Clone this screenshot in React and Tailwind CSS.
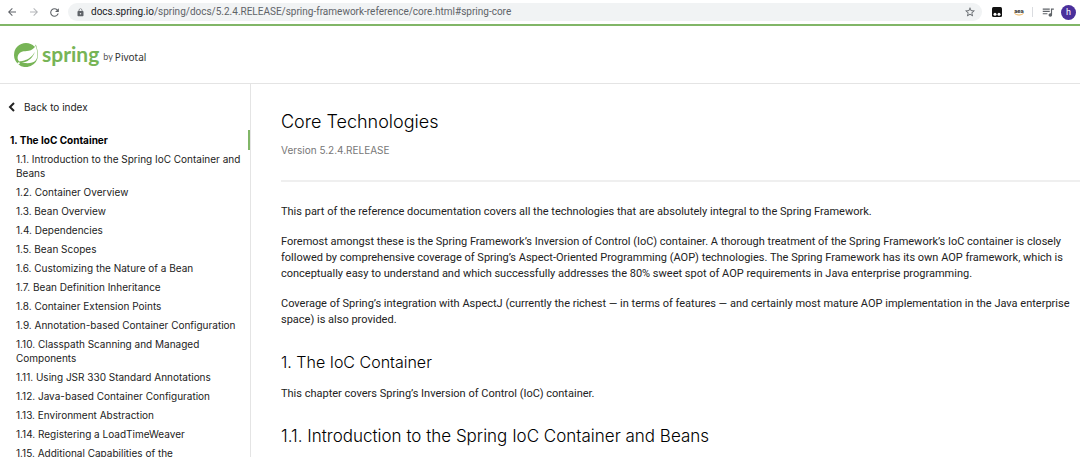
import React from "react";
import { SiSpring } from "react-icons/si";
import { MdArrowBack, MdArrowForward, MdRefresh, MdLock, MdStarBorder, MdQueueMusic } from "react-icons/md";

const sections = [
  "1.1. Introduction to the Spring IoC Container and Beans",
  "1.2. Container Overview",
  "1.3. Bean Overview",
  "1.4. Dependencies",
  "1.5. Bean Scopes",
  "1.6. Customizing the Nature of a Bean",
  "1.7. Bean Definition Inheritance",
  "1.8. Container Extension Points",
  "1.9. Annotation-based Container Configuration",
  "1.10. Classpath Scanning and Managed Components",
  "1.11. Using JSR 330 Standard Annotations",
  "1.12. Java-based Container Configuration",
  "1.13. Environment Abstraction",
  "1.14. Registering a LoadTimeWeaver",
  "1.15. Additional Capabilities of the",
];

function BrowserBar() {
  return (
    <div className="flex h-6 shrink-0 items-center bg-white font-[Roboto,sans-serif] text-[#5f6368]">
      <button aria-label="Back" className="ml-1.5 w-3"><MdArrowBack size={12} /></button>
      <button aria-label="Forward" className="ml-2.5 w-3 text-[#b4b6b9]"><MdArrowForward size={12} /></button>
      <button aria-label="Reload" className="ml-2 w-3"><MdRefresh size={13} /></button>
      <div className="ml-2 flex h-[18px] flex-1 items-center rounded-full bg-[#f1f3f4] pr-1.5 pl-2">
        <MdLock size={9} />
        <div className="ml-1.5 flex-1 text-[10px] leading-4 whitespace-nowrap">
          <span className="text-[#202124]">docs.spring.io</span>/spring/docs/5.2.4.RELEASE/spring-framework-reference/core.html#spring-core
        </div>
        <button aria-label="Bookmark"><MdStarBorder size={12} /></button>
      </div>
      <button aria-label="Tampermonkey" className="ml-2.5">
        <svg width="10" height="10" viewBox="0 0 10 10">
          <rect width="10" height="10" rx="1.5" fill="#111" />
          <circle cx="3" cy="7.2" r="1.5" fill="#fff" />
          <circle cx="7" cy="7.2" r="1.5" fill="#fff" />
        </svg>
      </button>
      <button aria-label="Shopping assistant" className="ml-3 flex flex-col items-center">
        <span className="font-[Roboto,sans-serif] text-[6px] leading-[5px] font-bold text-[#333]">aea</span>
        <svg width="10" height="3" viewBox="0 0 10 3">
          <path d="M0.5 0.5Q5 3.6 9.5 0.5" fill="none" stroke="#eeb35c" strokeWidth="1" />
        </svg>
      </button>
      <span className="ml-2 h-2.5 w-px bg-[#dadce0]" />
      <button aria-label="Media controls" className="ml-2"><MdQueueMusic size={14} /></button>
      <button aria-label="Profile" className="mr-1 ml-1.5 size-[15px] rounded-full bg-[#4a2f9b] text-[9px] leading-[15px] text-white">h</button>
    </div>
  );
}

function Header() {
  return (
    <header className="flex h-[60px] shrink-0 items-center border-t-2 border-b border-t-[#81b667] border-b-[#e4e4e4] px-3.5">
      <a href="#home" aria-label="Spring by Pivotal" className="flex items-center">
        <SiSpring size={24} className="text-[#77b456]" />
        <span className="ml-1 pb-0.5 font-[Lato,sans-serif] text-[21px] leading-6 font-bold text-[#77b456]">spring</span>
        <span className="ml-1 pt-1 font-[Lato,sans-serif] text-[9px] leading-4 text-[#555]">by</span>
        <span className="ml-0.5 pt-1 font-['Noto_Sans',sans-serif] text-[10px] leading-4 text-[#333]">Pivotal</span>
      </a>
    </header>
  );
}

function Sidebar() {
  return (
    <nav className="w-[251px] shrink-0 overflow-hidden border-r border-[#e4e4e4] pt-4 font-[Inter,sans-serif] text-[10px] leading-[14px]">
      <a href="#index" className="flex items-center gap-2 pl-2">
        <svg width="8" height="10" viewBox="0 0 8 10">
          <path d="M6 1L2 5L6 9" fill="none" stroke="#222" strokeWidth="2" />
        </svg>
        Back to index
      </a>
      <a href="#beans" className="mt-4 block border-r-2 border-[#81b667] py-[3px] pl-2.5 font-bold text-black">1. The IoC Container</a>
      <ul className="flex flex-col gap-[5px] pt-0.5 pr-1 pl-4">
        {sections.map((s) => (
          <li key={s}><a href="#section" className="block">{s}</a></li>
        ))}
      </ul>
    </nav>
  );
}

export default function App() {
  return (
    <div className="flex h-screen flex-col overflow-hidden bg-white font-[Roboto,sans-serif] text-[#222]">
      <BrowserBar />
      <Header />
      <div className="flex min-h-0 flex-1">
        <Sidebar />
        <main className="min-w-0 flex-1 overflow-hidden pl-[30px] text-[11px] leading-4">
          <h1 className="pt-6 font-[Inter,sans-serif] text-[18px] leading-7 font-light text-black">Core Technologies</h1>
          <p className="mt-1.5 pb-[22px] font-[Inter,sans-serif] text-[10px] text-[#777]">Version 5.2.4.RELEASE</p>
          <hr className="border-t-2 border-[#efefef]" />
          <div className="flex flex-col gap-3.5 pt-[22px] pr-1">
            <p>This part of the reference documentation covers all the technologies that are absolutely integral to the Spring Framework.</p>
            <p>Foremost amongst these is the Spring Framework’s Inversion of Control (IoC) container. A thorough treatment of the Spring Framework’s IoC container is closely followed by comprehensive coverage of Spring’s Aspect-Oriented Programming (AOP) technologies. The Spring Framework has its own AOP framework, which is conceptually easy to understand and which successfully addresses the 80% sweet spot of AOP requirements in Java enterprise programming.</p>
            <p>Coverage of Spring’s integration with AspectJ (currently the richest — in terms of features — and certainly most mature AOP implementation in the Java enterprise space) is also provided.</p>
          </div>
          <h2 className="mt-5 font-[Inter,sans-serif] text-[16px] leading-7 font-light text-black">1. The IoC Container</h2>
          <p className="mt-2.5">This chapter covers Spring’s Inversion of Control (IoC) container.</p>
          <h3 className="mt-5 font-[Inter,sans-serif] text-[17px] leading-7 font-light text-black">1.1. Introduction to the Spring IoC Container and Beans</h3>
        </main>
      </div>
    </div>
  );
}
